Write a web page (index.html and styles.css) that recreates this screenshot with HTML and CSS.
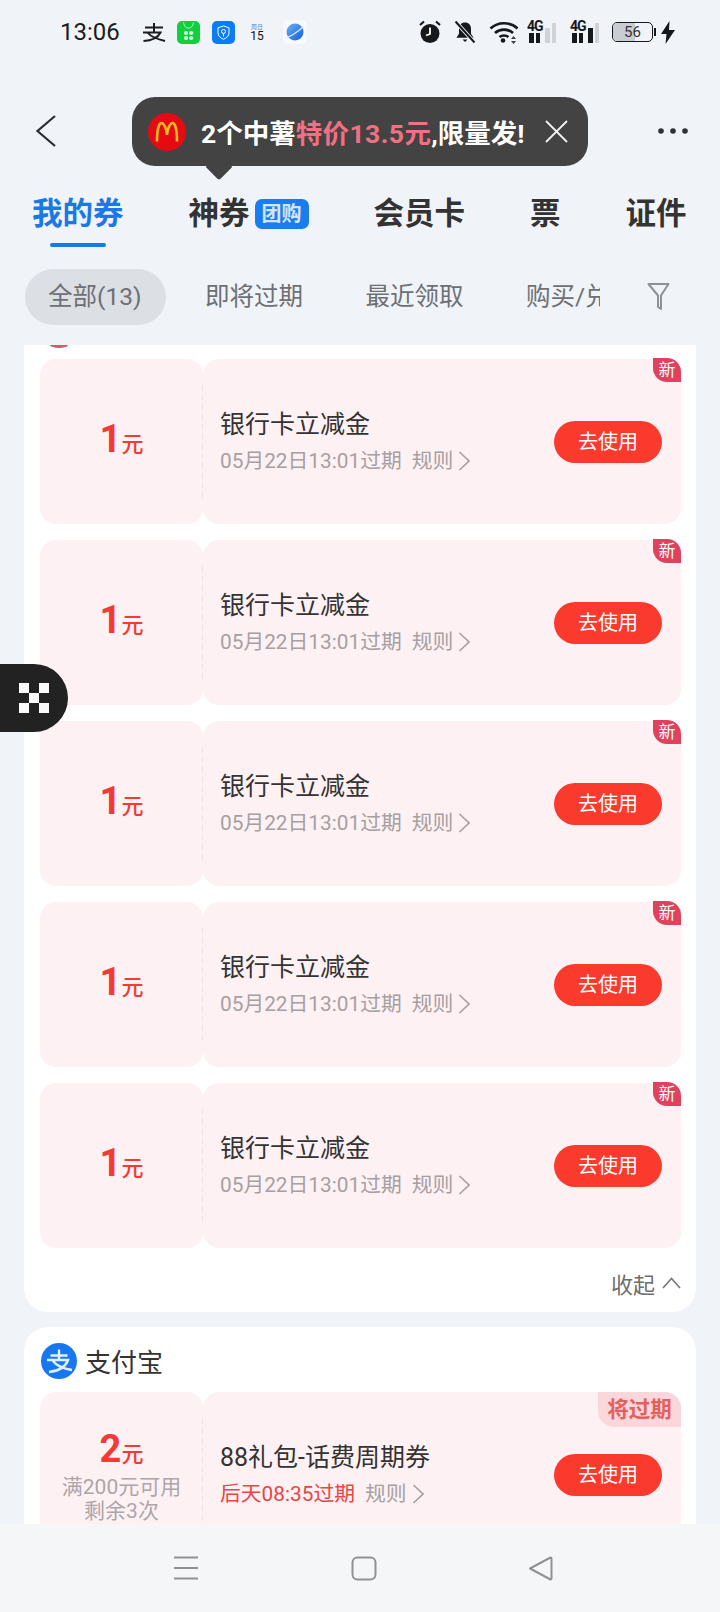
FILE: index.html
```html
<!DOCTYPE html>
<html lang="zh">
<head>
<meta charset="utf-8">
<title>我的券</title>
<link rel="stylesheet" href="styles.css">
</head>
<body>
<div class="app">
  <div class="status">
    <span class="time">13:06</span>
    <svg class="st-zhi" width="24" height="20" viewBox="0 0 24 20"><path d="M3 5.500h18M12 1v8.500M1 10.500h17.500c-2.500 5-8 8-17 8.500M6 11c3 4 9 6 17 8" fill="none" stroke="#1a1c20" stroke-width="2"/></svg>
    <svg class="st-app" width="23" height="23" viewBox="0 0 23 23"><rect width="23" height="23" rx="5" fill="#0fd13c"/><path d="M6.500 1.500c.8 4 2.400 5.600 5 5.600s4.200-1.600 5-5.600" fill="none" stroke="#b8f5c6" stroke-width="1"/><circle cx="9" cy="12" r="2.100" fill="#d6fbe0"/><circle cx="14.200" cy="12" r="2.100" fill="#d6fbe0"/><circle cx="9" cy="17" r="2.100" fill="#d6fbe0"/><circle cx="14.200" cy="17" r="2.100" fill="#d6fbe0"/></svg>
    <svg class="st-app st-gap12" width="23" height="23" viewBox="0 0 23 23"><rect width="23" height="23" rx="5" fill="#0a7cf5"/><path d="M11.500 5l5.500 1.800v5.200c0 3-2.500 5-5.500 6.200-3-1.200-5.500-3.200-5.500-6.200V6.800z" fill="none" stroke="#fff" stroke-width="1"/><circle cx="11.500" cy="10.500" r="2" fill="none" stroke="#fff"/><path d="M11.500 12.500v3" stroke="#fff"/></svg>
    <span class="st-cal"><i class="st-cal-top">周日</i><b class="st-cal-day">15</b></span>
    <svg class="st-planet" width="24" height="24" viewBox="0 0 24 24"><defs><linearGradient id="pl" x1="0" y1="0" x2="1" y2="1"><stop offset="0" stop-color="#6fb2f7"/><stop offset="1" stop-color="#0c5de0"/></linearGradient></defs><rect width="24" height="24" rx="5" fill="#f7f9fd"/><circle cx="12" cy="12" r="8.500" fill="url(#pl)"/><path d="M3.500 17.500c3-.5 12-6 17-11" fill="none" stroke="#dceafd" stroke-width="1.200"/></svg>
    <span class="st-spacer"></span>
    <svg class="st-ico" width="22" height="24" viewBox="0 0 22 24"><path d="M1 5l4-3.500M21 5l-4-3.500" stroke="#16181c" stroke-width="2.200"/><circle cx="11" cy="13.500" r="9.500" fill="#16181c"/><path d="M11 7.500v6.500l-4 1.500" fill="none" stroke="#fff" stroke-width="1.800"/></svg>
    <svg class="st-ico st-gap14" width="22" height="24" viewBox="0 0 22 24"><path d="M11 2.500c3.800 0 6 2.600 6 6.200v5l2.600 4H2.400l2.600-4V8.700c0-3.600 2.200-6.200 6-6.200z" fill="#16181c"/><path d="M8.500 19.500h5L11 22z" fill="#16181c"/><path d="M1.500 1.500l19 21" stroke="#f0f3f8" stroke-width="4"/><path d="M1.500 1.500l19 21" stroke="#16181c" stroke-width="2"/></svg>
    <svg class="st-ico st-gap14" width="30" height="24" viewBox="0 0 30 24"><path d="M1.500 8.500c7.500-7 19.500-7 27 0M6 13c5-4.500 13-4.500 18 0M10.500 17c2.500-2 6.500-2 9 0" fill="none" stroke="#16181c" stroke-width="2.700"/><circle cx="14" cy="20.500" r="2.300" fill="#16181c"/><path d="M24.500 16l2.500 3h-5zM24.500 24l2.500-3h-5z" fill="#3a3d42"/></svg>
    <span class="st-sig st-gap8"><b class="st-4g">4G</b><i class="bar b1 on"></i><i class="bar b2 on"></i><i class="bar b3"></i><i class="bar b4"></i></span>
    <span class="st-sig st-gap11"><b class="st-4g">4G</b><i class="bar b1 on"></i><i class="bar b2 on"></i><i class="bar b3 on"></i><i class="bar b4"></i></span>
    <span class="st-bat"><span class="st-bat-fill"></span><span class="st-bat-num">56</span></span>
    <span class="st-bat-cap"></span>
    <svg class="st-bolt" width="14" height="23" viewBox="0 0 14 23"><path d="M8.500 0L0 13h5.500L4.500 23 14 9H8z" fill="#16181c"/></svg>
  </div>

  <div class="topnav">
    <svg width="22" height="34" viewBox="0 0 22 34"><path d="M20 2L2.500 17 20 32" fill="none" stroke="#2a2c30" stroke-width="2.200"/></svg>
    <svg width="30" height="6" viewBox="0 0 30 6"><circle cx="3" cy="3" r="2.800" fill="#2f3136"/><circle cx="15" cy="3" r="2.800" fill="#2f3136"/><circle cx="27" cy="3" r="2.800" fill="#2f3136"/></svg>
  </div>

  <div class="tabs">
    <div class="tab active"><span class="tab-row">我的券</span><i class="tab-line"></i></div>
    <div class="tab"><span class="tab-row">神券<em class="tab-badge">团购</em></span></div>
    <div class="tab"><span class="tab-row">会员卡</span></div>
    <div class="tab"><span class="tab-row">票</span></div>
    <div class="tab"><span class="tab-row">证件</span></div>
  </div>

  <div class="filters">
    <div class="chips">
      <span class="chip on">全部(13)</span>
      <span class="chip">即将过期</span>
      <span class="chip">最近领取</span>
      <span class="chip">购买/兑换</span>
    </div>
    <svg class="funnel" width="23" height="28" viewBox="0 0 23 28"><path d="M1.500 2h20L14 13.500V27l-3-2V13.500z" fill="none" stroke="#8d9197" stroke-width="2" stroke-linejoin="round"/></svg>
  </div>

  <div class="scroller">
    <section class="card first">
      <i class="sliver"></i>
      <div class="coupons">
        <div class="coupon">
          <div class="c-left"><div class="amount"><b>1</b><span>元</span></div></div>
          <div class="c-right">
            <div class="c-info"><div class="c-title">银行卡立减金</div><div class="c-sub"><span>05月22日13:01过期</span><span class="rule">规则</span><svg class="chev" width="12" height="20" viewBox="0 0 12 20"><path d="M1.500 1l9.500 9-9.500 9" fill="none" stroke="#a6a0a2" stroke-width="1.600"/></svg></div></div>
            <span class="use">去使用</span>
            <span class="new">新</span>
          </div>
        </div>
        <div class="coupon">
          <div class="c-left"><div class="amount"><b>1</b><span>元</span></div></div>
          <div class="c-right">
            <div class="c-info"><div class="c-title">银行卡立减金</div><div class="c-sub"><span>05月22日13:01过期</span><span class="rule">规则</span><svg class="chev" width="12" height="20" viewBox="0 0 12 20"><path d="M1.500 1l9.500 9-9.500 9" fill="none" stroke="#a6a0a2" stroke-width="1.600"/></svg></div></div>
            <span class="use">去使用</span>
            <span class="new">新</span>
          </div>
        </div>
        <div class="coupon">
          <div class="c-left"><div class="amount"><b>1</b><span>元</span></div></div>
          <div class="c-right">
            <div class="c-info"><div class="c-title">银行卡立减金</div><div class="c-sub"><span>05月22日13:01过期</span><span class="rule">规则</span><svg class="chev" width="12" height="20" viewBox="0 0 12 20"><path d="M1.500 1l9.500 9-9.500 9" fill="none" stroke="#a6a0a2" stroke-width="1.600"/></svg></div></div>
            <span class="use">去使用</span>
            <span class="new">新</span>
          </div>
        </div>
        <div class="coupon">
          <div class="c-left"><div class="amount"><b>1</b><span>元</span></div></div>
          <div class="c-right">
            <div class="c-info"><div class="c-title">银行卡立减金</div><div class="c-sub"><span>05月22日13:01过期</span><span class="rule">规则</span><svg class="chev" width="12" height="20" viewBox="0 0 12 20"><path d="M1.500 1l9.500 9-9.500 9" fill="none" stroke="#a6a0a2" stroke-width="1.600"/></svg></div></div>
            <span class="use">去使用</span>
            <span class="new">新</span>
          </div>
        </div>
        <div class="coupon">
          <div class="c-left"><div class="amount"><b>1</b><span>元</span></div></div>
          <div class="c-right">
            <div class="c-info"><div class="c-title">银行卡立减金</div><div class="c-sub"><span>05月22日13:01过期</span><span class="rule">规则</span><svg class="chev" width="12" height="20" viewBox="0 0 12 20"><path d="M1.500 1l9.500 9-9.500 9" fill="none" stroke="#a6a0a2" stroke-width="1.600"/></svg></div></div>
            <span class="use">去使用</span>
            <span class="new">新</span>
          </div>
        </div>
      </div>
      <div class="collapse"><span>收起</span><svg width="19" height="12" viewBox="0 0 19 12"><path d="M1 11l8.500-9.500L18 11" fill="none" stroke="#777" stroke-width="1.600"/></svg></div>
    </section>

    <section class="card">
      <div class="brand">
        <svg width="36" height="36" viewBox="0 0 36 36"><circle cx="18" cy="18" r="18" fill="#1677f0"/><path d="M9.500 12.500h17M18 6.500v10M6 17h21c-2.500 7-9 11-19 12M12 18c4 5.500 10 7.500 19 9" fill="none" stroke="#e3f0ff" stroke-width="2.400"/></svg>
        <span class="brand-name">支付宝</span>
      </div>
      <div class="coupon">
        <div class="c-left">
          <div class="amount tight"><b>2</b><span>元</span></div>
          <div class="limit">满200元可用</div>
          <div class="limit">剩余3次</div>
        </div>
        <div class="c-right">
          <div class="c-info"><div class="c-title">88礼包-话费周期券</div><div class="c-sub"><span class="soon">后天08:35过期</span><span class="rule">规则</span><svg class="chev" width="12" height="20" viewBox="0 0 12 20"><path d="M1.500 1l9.500 9-9.500 9" fill="none" stroke="#a6a0a2" stroke-width="1.600"/></svg></div></div>
          <span class="use">去使用</span>
          <span class="expiring">将过期</span>
        </div>
      </div>
    </section>
  </div>

  <div class="navbar">
    <svg width="26" height="24" viewBox="0 0 26 24"><path d="M1 1.500h24M1 12h24M1 22.500h24" stroke="#8f9194" stroke-width="2"/></svg>
    <svg width="26" height="25" viewBox="0 0 26 25"><rect x="1.500" y="1.500" width="23" height="22" rx="5" fill="none" stroke="#8f9194" stroke-width="2"/></svg>
    <svg width="26" height="25" viewBox="0 0 26 25"><path d="M1 12.500L21.500 1.500c.5 0 1 .4 1 1v20c0 .6-.5 1-1 1z" fill="none" stroke="#8f9194" stroke-width="2" stroke-linejoin="round"/></svg>
  </div>

  <div class="tooltip">
    <svg class="mc" width="38" height="38" viewBox="0 0 38 38"><circle cx="19" cy="19" r="19" fill="#e60a12"/><path d="M9 28.500C9 16 11 10 13.500 10S19 17 19 22c0-5 3-12 5.500-12S29 16 29 28.500" fill="none" stroke="#f5b81f" stroke-width="2.600"/></svg>
    <span class="tip-text">2个中薯<em>特价13.5元</em>,限量发!</span>
    <svg class="tip-x" width="23" height="23" viewBox="0 0 23 23"><path d="M1 1l21 21M22 1L1 22" stroke="#f2f2f2" stroke-width="1.800"/></svg>
    <i class="tip-arrow"></i>
  </div>

  <div class="float">
    <div class="checker"><i></i><i class="off"></i><i></i><i class="off"></i><i></i><i class="off"></i><i></i><i class="off"></i><i></i></div>
  </div>
</div>
</body>
</html>
```

FILE: styles.css
```css
* { box-sizing: border-box; }
html, body { margin: 0; padding: 0; }
body { font-family: Roboto, "Noto Sans CJK SC", sans-serif; background: #f0f3f8; }
i, em { font-style: normal; }

.app { position: relative; width: 720px; height: 1612px; overflow: hidden; display: flex; flex-direction: column; background: #f0f3f8; color: #333; }

/* status bar */
.status { height: 64px; flex: none; display: flex; align-items: center; padding: 0 45px 0 60px; }
.time { font-size: 24px; color: #1a1c20; width: 82px; }
.st-zhi { flex: none; margin-right: 11px; }
.st-gap12 { margin-left: 12px; }
.st-cal { margin-left: 15px; width: 14px; display: flex; flex-direction: column; align-items: center; color: #111; }
.st-cal-top { font-size: 6px; line-height: 7px; color: #4b7fc0; white-space: nowrap; }
.st-cal-day { font-size: 12px; line-height: 12px; font-weight: 400; }
.st-planet { margin-left: 19px; }
.st-spacer { flex: 1; }
.st-gap14 { margin-left: 13px; }
.st-gap8 { margin-left: 8px; }
.st-gap11 { margin-left: 11px; }
.st-sig { position: relative; width: 32px; height: 22px; display: flex; align-items: flex-end; gap: 2px; padding-left: 2px; }
.st-4g { position: absolute; left: 0; top: -2px; font-size: 14px; line-height: 14px; font-weight: 700; color: #16181c; letter-spacing: -1px; }
.bar { width: 4.500px; background: #cfd2d7; display: block; }
.bar.on { background: #16181c; }
.b1, .b2 { height: 10px; }
.b3 { height: 15px; margin-left: 3px; }
.b4 { height: 20px; }
.st-bat { margin-left: 10px; position: relative; width: 41px; height: 20px; border: 1.500px solid #16181c; border-radius: 5px; overflow: hidden; display: flex; align-items: center; justify-content: center; }
.st-bat-fill { position: absolute; left: 0; top: 0; bottom: 0; width: 56%; background: #c9ccd2; }
.st-bat-num { position: relative; font-size: 15px; color: #333; }
.st-bat-cap { width: 2px; height: 8px; margin-left: 1px; background: #16181c; }
.st-bolt { margin-left: 5px; }

/* top nav */
.topnav { height: 90px; flex: none; display: flex; align-items: center; justify-content: space-between; padding: 44px 32px 0 35px; }

/* tabs */
.tabs { height: 96px; flex: none; display: flex; align-items: flex-start; gap: 65px; padding: 40px 0 0 32px; white-space: nowrap; }
.tab { display: flex; flex-direction: column; align-items: center; flex: none; }
.tab-row { display: flex; align-items: center; font-size: 30.500px; line-height: 40px; font-weight: 700; color: #333; }
.tab.active .tab-row { color: #1b78e8; }
.tab-line { width: 56px; height: 4px; margin-top: 9px; border-radius: 2px; background: #1b78e8; }
.tab-badge { margin-left: 5px; width: 54px; height: 30px; border-radius: 7px; background: #1b7cf0; color: #d3e6fd; font-size: 20px; line-height: 30px; font-weight: 700; text-align: center; }

/* filters */
.filters { height: 95px; flex: none; display: flex; align-items: flex-start; padding: 19px 0 0 25px; }
.chips { width: 575px; display: flex; gap: 14.500px; overflow: hidden; flex: none; }
.chip { flex: none; height: 56px; padding: 0 24px; border-radius: 28px; font-size: 24.500px; line-height: 56px; color: #6d7074; white-space: nowrap; }
.chip.on { background: #dcdfe4; padding: 0 25px 0 23px; }
.funnel { margin: 13px 0 0 47px; }

/* list */
.scroller { flex: 1; min-height: 0; overflow: hidden; padding: 0 24px; }
.card { position: relative; background: #fff; border-radius: 24px; padding: 0 15px 0 16px; margin-bottom: 15px; }
.card.first { border-radius: 0 0 24px 24px; padding-top: 14px; }
.sliver { position: absolute; left: 26px; top: 0; width: 18px; height: 3px; border-radius: 0 0 50% 50% / 0 0 100% 100%; background: #d9566c; }
.coupons { display: flex; flex-direction: column; gap: 16px; }
.coupon { height: 165px; display: flex; }
.c-left { position: relative; width: 163px; flex: none; background: #fef1f4; border-radius: 16px; display: flex; flex-direction: column; align-items: center; justify-content: center; }
.c-left::after { content: ""; position: absolute; right: -1px; top: 26px; bottom: 26px; border-right: 2px dashed #f5e2e6; }
.c-right { position: relative; flex: 1; background: #fef1f4; border-radius: 16px; display: flex; align-items: center; justify-content: space-between; padding: 0 19px 0 17px; }
.c-info { padding-bottom: 1px; }
.amount { display: flex; align-items: baseline; color: #f23a36; line-height: 44px; margin-top: 1px; }
.amount.tight { margin: 0 0 -2px; }
.amount b { font-size: 38px; font-weight: 700; }
.amount span { font-size: 22px; font-weight: 500; }
.limit { font-size: 21px; line-height: 24px; color: #aba6a8; white-space: nowrap; }
.c-title { font-size: 25px; line-height: 36px; color: #333; white-space: nowrap; }
.c-sub { margin-top: 3px; display: flex; align-items: center; font-size: 20.800px; line-height: 30px; color: #a6a0a2; white-space: nowrap; }
.soon { color: #e84545; }
.rule { margin-left: 10px; }
.chev { margin-left: 5px; }
.use { width: 108px; height: 42px; border-radius: 21px; background: #fb3a2e; color: #fff; font-size: 20px; line-height: 42px; text-align: center; flex: none; }
.new { position: absolute; right: 0; top: -1px; width: 28px; height: 24px; background: #e0415c; border-radius: 0 14px 0 14px; color: #fff; font-size: 17px; line-height: 24px; text-align: center; }
.expiring { position: absolute; right: 0; top: 0; width: 83px; height: 35px; background: #fbd6da; border-radius: 0 16px 0 16px; color: #e2605f; font-size: 21.500px; line-height: 35px; font-weight: 700; text-align: center; }
.collapse { height: 64px; display: flex; align-items: center; justify-content: flex-end; gap: 7px; padding-top: 6px; font-size: 22px; color: #6d6d6d; }
.brand { height: 65px; display: flex; align-items: center; padding-top: 2px; padding-left: 1px; gap: 8px; }
.brand-name { font-size: 26px; color: #333; }

/* bottom nav */
.navbar { height: 88px; flex: none; background: #f5f6f7; display: flex; align-items: flex-start; padding: 32px 0 0 173px; gap: 152px; position: relative; }

/* overlays */
.tooltip { position: absolute; left: 132px; top: 97px; width: 456px; height: 69px; border-radius: 23px; background: #434343; display: flex; align-items: center; padding-left: 16px; }
.tip-text { margin-left: 15px; font-size: 26.500px; font-weight: 700; color: #fff; white-space: nowrap; }
.tip-text em { color: #f36f83; letter-spacing: .4px; }
.tip-x { margin-left: auto; margin-right: 20px; }
.tip-arrow { position: absolute; left: 76px; bottom: -12px; width: 22px; height: 22px; background: #434343; transform: rotate(45deg) scale(.85); border-radius: 0 0 3px 0; }
.mc { flex: none; }
.float { position: absolute; left: 0; top: 664px; width: 68px; height: 68px; border-radius: 0 34px 34px 0; background: #222; display: flex; align-items: center; padding-left: 19px; }
.checker { display: grid; grid-template-columns: repeat(3, 10px); grid-auto-rows: 10px; }
.checker i { background: #fafafa; }
.checker i.off { background: transparent; }
```
